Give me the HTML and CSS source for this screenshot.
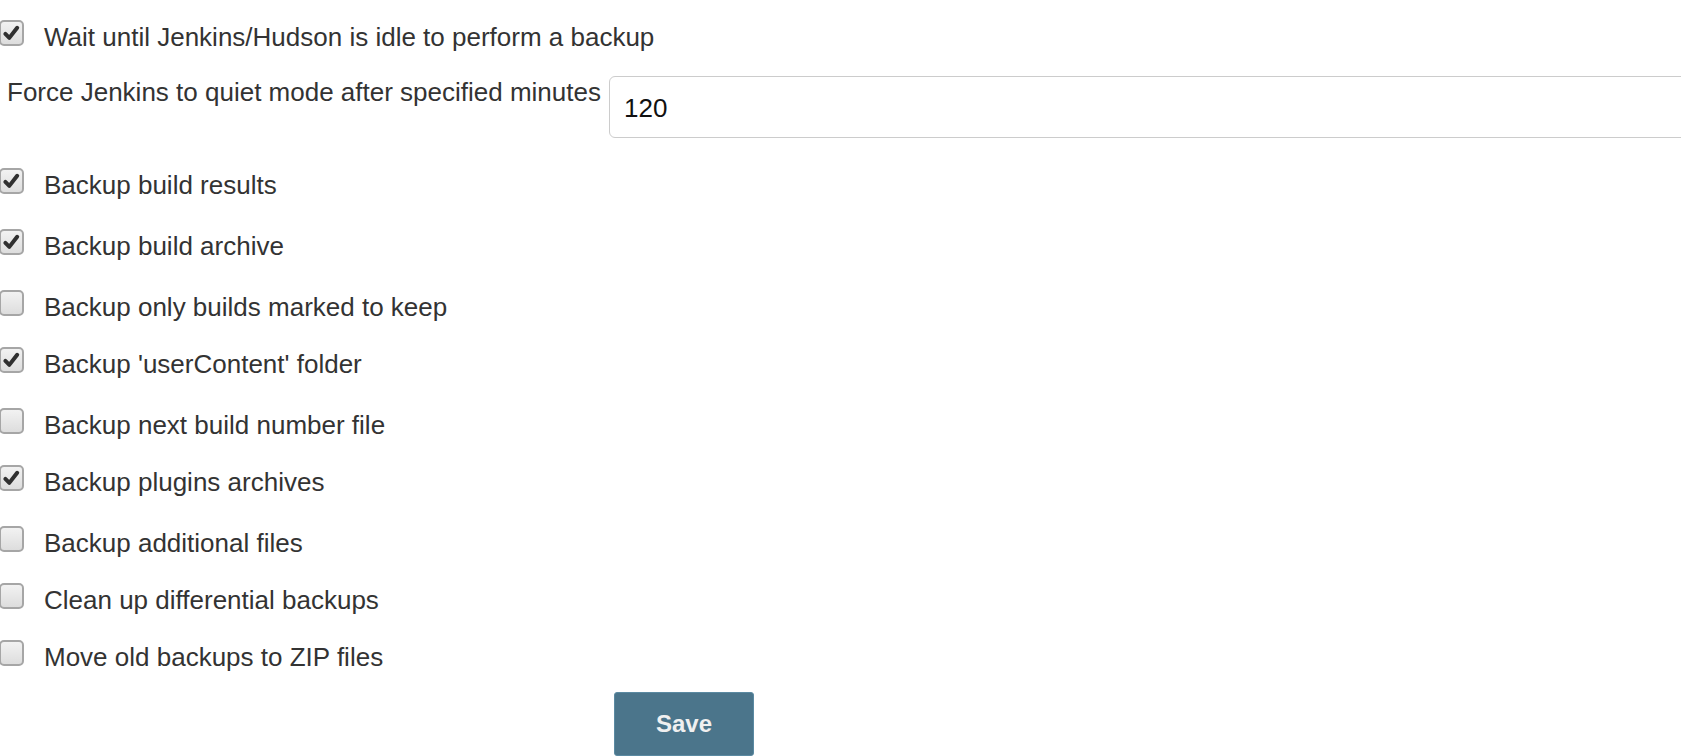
FILE: index.html
```html
<!DOCTYPE html>
<html>
<head>
<meta charset="utf-8">
<link rel="stylesheet" href="styles.css">
</head>
<body>
<form class="form">
  <label class="check-row first">
    <span class="cb checked"><svg viewBox="0 0 24 24"><polyline points="5,12.5 9.5,17 18.5,5.5" /></svg></span>
    <span class="text">Wait until Jenkins/Hudson is idle to perform a backup</span>
  </label>

  <div class="field-row">
    <div class="field-name">Force Jenkins to quiet mode after specified minutes</div>
    <div class="field-main"><input class="text-input" type="text" value="120"></div>
  </div>

  <label class="check-row after-field">
    <span class="cb checked"><svg viewBox="0 0 24 24"><polyline points="5,12.5 9.5,17 18.5,5.5" /></svg></span>
    <span class="text">Backup build results</span>
  </label>
  <label class="check-row wide">
    <span class="cb checked"><svg viewBox="0 0 24 24"><polyline points="5,12.5 9.5,17 18.5,5.5" /></svg></span>
    <span class="text">Backup build archive</span>
  </label>
  <label class="check-row wide">
    <span class="cb"></span>
    <span class="text">Backup only builds marked to keep</span>
  </label>
  <label class="check-row">
    <span class="cb checked"><svg viewBox="0 0 24 24"><polyline points="5,12.5 9.5,17 18.5,5.5" /></svg></span>
    <span class="text">Backup 'userContent' folder</span>
  </label>
  <label class="check-row wide">
    <span class="cb"></span>
    <span class="text">Backup next build number file</span>
  </label>
  <label class="check-row">
    <span class="cb checked"><svg viewBox="0 0 24 24"><polyline points="5,12.5 9.5,17 18.5,5.5" /></svg></span>
    <span class="text">Backup plugins archives</span>
  </label>
  <label class="check-row wide">
    <span class="cb"></span>
    <span class="text">Backup additional files</span>
  </label>
  <label class="check-row">
    <span class="cb"></span>
    <span class="text">Clean up differential backups</span>
  </label>
  <label class="check-row">
    <span class="cb"></span>
    <span class="text">Move old backups to ZIP files</span>
  </label>

  <div class="actions">
    <button class="save-btn" type="button">Save</button>
  </div>
</form>
</body>
</html>
```

FILE: styles.css
```css
html, body {
  margin: 0;
  padding: 0;
  background: #ffffff;
  overflow: hidden;
}

body {
  font-family: "Liberation Sans", Arial, Helvetica, sans-serif;
  font-size: 26px;
  color: #333333;
  width: 1681px;
  height: 756px;
}

.form {
  display: flex;
  flex-direction: column;
  padding-top: 22px;
}

.check-row {
  display: flex;
  align-items: flex-start;
  height: 30px;
  line-height: 30px;
  margin-top: 27px;
  white-space: nowrap;
}

.check-row.first {
  margin-top: 0;
}

.check-row.wide {
  margin-top: 31px;
}

.check-row.after-field {
  margin-top: 32px;
}

.cb {
  flex: 0 0 auto;
  width: 21px;
  height: 22px;
  margin-left: -1px;
  margin-top: -2px;
  margin-right: 20px;
  border: 2px solid #a6a6a6;
  border-radius: 5px;
  background: linear-gradient(#f2f2f2, #dddddd);
  display: flex;
  align-items: center;
  justify-content: center;
}

.cb svg {
  width: 21px;
  height: 21px;
}

.cb svg polyline {
  fill: none;
  stroke: #303030;
  stroke-width: 4.6;
  stroke-linecap: round;
  stroke-linejoin: round;
}

.field-row {
  display: flex;
  align-items: flex-start;
  margin-top: 24px;
  margin-right: -40px;
}

.field-name {
  flex: 0 0 609px;
  box-sizing: border-box;
  padding-left: 7px;
  padding-top: 1px;
  line-height: 30px;
  white-space: nowrap;
}

.field-main {
  flex: 1 1 auto;
}

.text-input {
  display: block;
  width: 100%;
  box-sizing: border-box;
  height: 62px;
  padding: 3px 14px 0 14px;
  border: 1.5px solid #cccccc;
  border-radius: 6px;
  font-family: "Liberation Sans", Arial, Helvetica, sans-serif;
  font-size: 26px;
  color: #111111;
  background: #ffffff;
  outline: none;
}

.actions {
  display: flex;
  padding-left: 614px;
  margin-top: 20px;
}

.save-btn {
  width: 140px;
  height: 64px;
  border: 1.5px solid #5b8aa2;
  border-radius: 3px;
  background: #4b758b;
  color: #f0f0f0;
  font-family: "Liberation Sans", Arial, Helvetica, sans-serif;
  font-size: 24px;
  font-weight: bold;
  padding: 0;
}
```
